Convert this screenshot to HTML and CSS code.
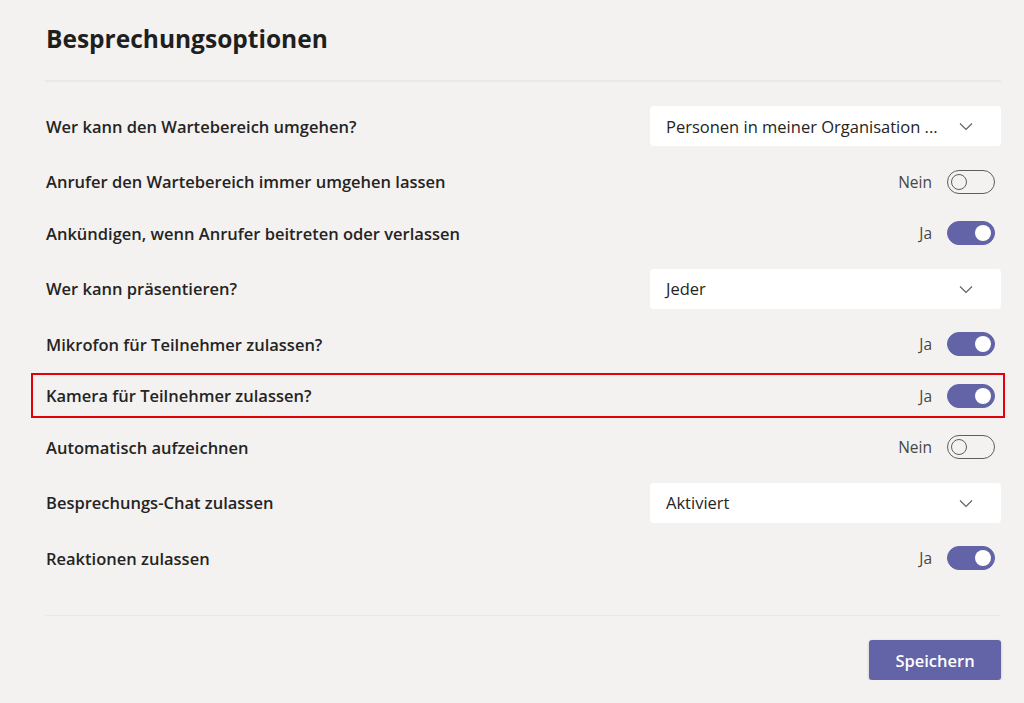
FILE: index.html
```html
<!DOCTYPE html>
<html lang="de">
<head>
    <meta charset="UTF-8">
    <meta name="viewport" content="width=device-width, initial-scale=1.0">
    <title>Besprechungsoptionen</title>
    <link rel="stylesheet" href="styles.css">
</head>
<body>
    <div class="page">
        <h1>Besprechungsoptionen</h1>

        <div class="options">
            <div class="row">
                <span class="label">Wer kann den Wartebereich umgehen?</span>
                <div class="select">
                    <span>Personen in meiner Organisation ...</span>
                    <svg class="chevron" width="16" height="16" viewBox="0 0 16 16"><path d="M2 5.5l6 6 6-6" fill="none" stroke="#605e5c" stroke-width="1.1"/></svg>
                </div>
            </div>

            <div class="row toggle-row">
                <span class="label">Anrufer den Wartebereich immer umgehen lassen</span>
                <div class="switch-wrap"><span class="state">Nein</span><span class="switch"></span></div>
            </div>

            <div class="row toggle-row">
                <span class="label">Ankündigen, wenn Anrufer beitreten oder verlassen</span>
                <div class="switch-wrap"><span class="state">Ja</span><span class="switch on"></span></div>
            </div>

            <div class="row">
                <span class="label">Wer kann präsentieren?</span>
                <div class="select">
                    <span>Jeder</span>
                    <svg class="chevron" width="16" height="16" viewBox="0 0 16 16"><path d="M2 5.5l6 6 6-6" fill="none" stroke="#605e5c" stroke-width="1.1"/></svg>
                </div>
            </div>

            <div class="row toggle-row">
                <span class="label">Mikrofon für Teilnehmer zulassen?</span>
                <div class="switch-wrap"><span class="state">Ja</span><span class="switch on"></span></div>
            </div>

            <div class="row toggle-row highlighted">
                <span class="label">Kamera für Teilnehmer zulassen?</span>
                <div class="switch-wrap"><span class="state">Ja</span><span class="switch on"></span></div>
            </div>

            <div class="row toggle-row">
                <span class="label">Automatisch aufzeichnen</span>
                <div class="switch-wrap"><span class="state">Nein</span><span class="switch"></span></div>
            </div>

            <div class="row">
                <span class="label">Besprechungs-Chat zulassen</span>
                <div class="select">
                    <span>Aktiviert</span>
                    <svg class="chevron" width="16" height="16" viewBox="0 0 16 16"><path d="M2 5.5l6 6 6-6" fill="none" stroke="#605e5c" stroke-width="1.1"/></svg>
                </div>
            </div>

            <div class="row toggle-row">
                <span class="label">Reaktionen zulassen</span>
                <div class="switch-wrap"><span class="state">Ja</span><span class="switch on"></span></div>
            </div>
        </div>

        <div class="footer">
            <button type="button">Speichern</button>
        </div>
    </div>
</body>
</html>
```

FILE: styles.css
```css
body {
    margin: 0;
    background-color: #f3f2f1;
    font-family: "Open Sans", "Noto Sans", sans-serif;
    color: #252423;
}
.page {
    margin: 0 23px 0 45px;
    padding-top: 21px;
}
h1 {
    margin: 0;
    padding: 0 0 0 1px;
    font-size: 24.5px;
    font-weight: 700;
    line-height: 36px;
    height: 59px;
    color: #201f1e;
    border-bottom: 2px solid #ebe9e7;
}
.options {
    display: flex;
    flex-direction: column;
    gap: 19.5px;
    padding: 24px 0 41px 1px;
    border-bottom: 1px solid #ebe9e7;
}
.row {
    display: flex;
    align-items: center;
    justify-content: space-between;
    height: 40px;
    position: relative;
}
.toggle-row {
    height: 32px;
}
.label {
    font-size: 16.5px;
    font-weight: 600;
}
.select {
    width: 351px;
    height: 40px;
    box-sizing: border-box;
    padding: 0 27px 0 16px;
    background: #ffffff;
    border-radius: 4px;
    display: flex;
    align-items: center;
    justify-content: space-between;
    font-size: 16.5px;
}
.chevron {
    display: block;
}
.switch-wrap {
    display: flex;
    align-items: center;
    gap: 15px;
    padding-right: 6px;
}
.state {
    font-size: 15.5px;
    color: #484644;
}
.switch {
    position: relative;
    width: 48px;
    height: 24px;
    box-sizing: border-box;
    border: 1px solid #605e5c;
    border-radius: 12px;
    background: transparent;
}
.switch::after {
    content: "";
    position: absolute;
    top: 3px;
    left: 3px;
    width: 16px;
    height: 16px;
    box-sizing: border-box;
    border: 1.5px solid #605e5c;
    border-radius: 50%;
}
.switch.on {
    background: #6264a7;
    border-color: #6264a7;
}
.switch.on::after {
    left: auto;
    right: 3px;
    border: none;
    background: #ffffff;
}
.highlighted::after {
    content: "";
    position: absolute;
    top: -7px;
    bottom: -6px;
    left: -15px;
    right: -4px;
    border: 2px solid #e3000b;
    pointer-events: none;
}
.footer {
    display: flex;
    justify-content: flex-end;
    padding: 24px 0 0 0;
}
button {
    width: 132px;
    height: 40px;
    border: none;
    border-radius: 3px;
    background-color: #6264a7;
    color: #ffffff;
    font-family: "Open Sans", "Noto Sans", sans-serif;
    font-size: 16.5px;
    font-weight: 600;
    box-shadow: 0 1px 3px rgba(0,0,0,0.2);
    cursor: pointer;
}
```
